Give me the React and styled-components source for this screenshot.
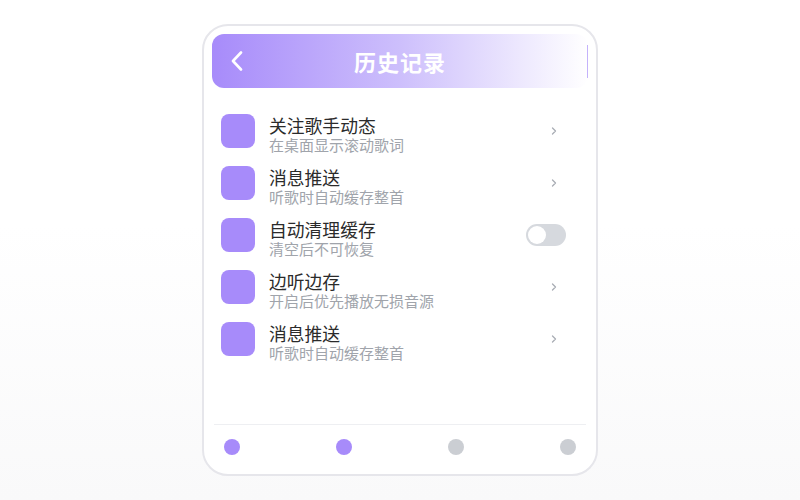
import React, { useState } from "react";
import styled, { createGlobalStyle } from "styled-components";

const GlobalStyle = createGlobalStyle`
  html, body {
    margin: 0;
    padding: 0;
  }
  body {
    min-height: 500px;
    background: linear-gradient(to bottom, #ffffff 45%, #f9f9fa 100%);
    font-family: "Noto Sans CJK SC", "Noto Sans", sans-serif;
  }
`;

const Page = styled.div`
  height: 500px;
  display: flex;
  align-items: center;
  justify-content: center;
`;

const Card = styled.div`
  box-sizing: border-box;
  width: 396px;
  height: 452px;
  border: 2px solid #e6e6eb;
  border-radius: 26px;
  background: #ffffff;
  padding: 8px;
  display: flex;
  flex-direction: column;
`;

const Header = styled.div`
  position: relative;
  height: 54px;
  border-radius: 12px;
  background: linear-gradient(to right, #a78bfa 0%, #cdbffc 50%, #ffffff 100%);
  display: flex;
  align-items: center;
  justify-content: center;
  &::after {
    content: "";
    position: absolute;
    right: 0;
    top: 11px;
    bottom: 10px;
    width: 1px;
    background: #c4b2fb;
  }
`;

const Back = styled.button`
  position: absolute;
  left: 16px;
  top: 17px;
  border: none;
  background: none;
  padding: 0;
  width: 20px;
  height: 20px;
  cursor: pointer;
`;

const Title = styled.h1`
  margin: 0;
  color: #ffffff;
  font-size: 22px;
  font-weight: 700;
  letter-spacing: 1px;
`;

const List = styled.div`
  flex: 1;
  padding: 17px 22px 0 9px;
`;

const Row = styled.div`
  display: flex;
  align-items: flex-start;
  padding: 9px 0;
  height: 34px;
`;

const Icon = styled.div`
  width: 34px;
  height: 34px;
  border-radius: 8px;
  background: #a78bfa;
  flex-shrink: 0;
`;

const Text = styled.div`
  flex: 1;
  margin-left: 14px;
  display: flex;
  flex-direction: column;
`;

const Name = styled.div`
  font-size: 17.8px;
  line-height: 22px;
  color: #2b2b2b;
`;

const Desc = styled.div`
  font-size: 15px;
  line-height: 18px;
  color: #a0a4ab;
`;

const Side = styled.div`
  height: 34px;
  display: flex;
  align-items: center;
`;

const Chevron = styled.svg`
  width: 8px;
  height: 10px;
  margin-right: 8px;
`;

const Toggle = styled.button`
  position: relative;
  width: 40px;
  height: 22px;
  border: none;
  border-radius: 11px;
  padding: 0;
  background: ${(p) => (p.$on ? "#a78bfa" : "#d6d9de")};
  cursor: pointer;
  &::after {
    content: "";
    position: absolute;
    top: 2px;
    left: ${(p) => (p.$on ? "20px" : "2px")};
    width: 18px;
    height: 18px;
    border-radius: 50%;
    background: #ffffff;
  }
`;

const Footer = styled.div`
  margin: 0 2px;
  border-top: 1px solid #eeeff2;
  padding: 14px 10px 11px;
  display: flex;
  justify-content: space-between;
`;

const Dot = styled.span`
  width: 16px;
  height: 16px;
  border-radius: 50%;
  background: ${(p) => (p.$active ? "#a78bfa" : "#cbced3")};
`;

const items = [
  { name: "关注歌手动态", desc: "在桌面显示滚动歌词" },
  { name: "消息推送", desc: "听歌时自动缓存整首" },
  { name: "自动清理缓存", desc: "清空后不可恢复", toggle: true },
  { name: "边听边存", desc: "开启后优先播放无损音源" },
  { name: "消息推送", desc: "听歌时自动缓存整首" },
];

const App = () => {
  const [on, setOn] = useState(false);
  return (
    <>
      <GlobalStyle />
      <Page>
        <Card>
          <Header>
            <Back aria-label="返回">
              <svg width="20" height="20" viewBox="0 0 20 20">
                <polyline
                  points="13,1.5 5,10 13,18.5"
                  fill="none"
                  stroke="#ffffff"
                  strokeWidth="2.6"
                  strokeLinecap="round"
                  strokeLinejoin="round"
                />
              </svg>
            </Back>
            <Title>历史记录</Title>
          </Header>
          <List>
            {items.map((item, i) => (
              <Row key={i}>
                <Icon />
                <Text>
                  <Name>{item.name}</Name>
                  <Desc>{item.desc}</Desc>
                </Text>
                <Side>
                  {item.toggle ? (
                    <Toggle $on={on} onClick={() => setOn(!on)} />
                  ) : (
                    <Chevron viewBox="0 0 8 10">
                      <polyline
                        points="2.5,2 5.5,5 2.5,8"
                        fill="none"
                        stroke="#a9adb5"
                        strokeWidth="1.3"
                        strokeLinecap="round"
                        strokeLinejoin="round"
                      />
                    </Chevron>
                  )}
                </Side>
              </Row>
            ))}
          </List>
          <Footer>
            <Dot $active />
            <Dot $active />
            <Dot />
            <Dot />
          </Footer>
        </Card>
      </Page>
    </>
  );
};

export default App;
